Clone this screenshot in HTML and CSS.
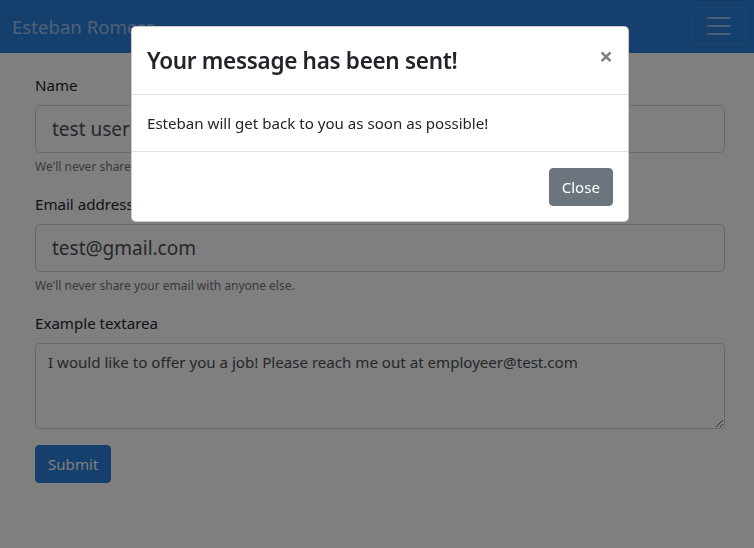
FILE: index.html
```html
<!DOCTYPE html>
<html lang="en">
<head>
<meta charset="utf-8">
<title>Esteban Romero</title>
<link rel="stylesheet" href="styles.css">
</head>
<body>
<nav class="navbar">
  <a class="brand" href="#">Esteban Romero</a>
  <button class="toggler" type="button" aria-label="Toggle navigation">
    <svg width="30" height="30" viewBox="0 0 30 30"><path d="M4 7h22M4 15h22M4 23h22" stroke="rgba(255,255,255,0.5)" stroke-width="2" stroke-linecap="round"/></svg>
  </button>
</nav>
<main class="content">
  <form class="contact">
    <div class="group">
      <label class="label">Name</label>
      <input class="control control-lg" type="text" value="test user">
      <small class="help">We'll never share your name with anyone else.</small>
    </div>
    <div class="group">
      <label class="label">Email address</label>
      <input class="control control-lg" type="email" value="test@gmail.com">
      <small class="help">We'll never share your email with anyone else.</small>
    </div>
    <div class="group">
      <label class="label">Example textarea</label>
      <textarea class="control area" rows="3">I would like to offer you a job! Please reach me out at employeer@test.com</textarea>
    </div>
    <button class="btn btn-primary" type="button">Submit</button>
  </form>
</main>
<div class="backdrop"></div>
<div class="modal">
  <div class="dialog">
    <div class="m-header">
      <h4 class="m-title">Your message has been sent!</h4>
      <button class="close" type="button" aria-label="Close">&times;</button>
    </div>
    <div class="m-body">Esteban will get back to you as soon as possible!</div>
    <div class="m-footer">
      <button class="btn btn-secondary" type="button">Close</button>
    </div>
  </div>
</div>
</body>
</html>
```
FILE: styles.css
```css
* { box-sizing: border-box; }
html, body { margin: 0; padding: 0; }
body {
  font-family: "Noto Sans", "Open Sans", sans-serif;
  font-size: 15.1px;
  line-height: 24px;
  color: #212529;
  background: #fff;
  width: 754px;
  height: 548px;
  overflow: hidden;
}
.navbar {
  height: 53px;
  background: #2a7ed8;
  display: flex;
  align-items: center;
  justify-content: space-between;
  padding: 0 8px 0 12px;
}
.brand {
  color: rgba(255,255,255,0.55);
  font-size: 18.6px;
  text-decoration: none;
  line-height: 30px;
}
.toggler {
  width: 54px;
  height: 38px;
  margin-top: -2px;
  background: transparent;
  border: 1px solid rgba(255,255,255,0.1);
  border-radius: 4px;
  display: flex;
  align-items: center;
  justify-content: center;
  padding: 0;
}
.content { padding: 20px 29px 0 35px; }
.group { margin-bottom: 16px; }
.label { display: block; margin-bottom: 8px; line-height: 24px; }
.control {
  display: block;
  width: 100%;
  font-family: inherit;
  color: #495057;
  background: #fff;
  border: 1px solid #ced4da;
  border-radius: 4px;
}
.control-lg {
  height: 48px;
  padding: 8px 16px;
  font-size: 19px;
  line-height: 30px;
  border-radius: 5px;
}
.area {
  height: 86px;
  padding: 6px 12px;
  font-size: 15.1px;
  line-height: 24px;
  resize: vertical;
}
.help {
  display: block;
  margin-top: 4px;
  font-size: 12px;
  color: #6c757d;
  line-height: 19px;
}
.btn {
  height: 38px;
  font-family: inherit;
  font-size: 15.1px;
  line-height: 24px;
  padding: 6px 12px;
  border-radius: 4px;
  border: 1px solid transparent;
  color: #fff;
  cursor: pointer;
}
.btn-primary { background: #2a7ed8; border-color: #2a7ed8; }
.btn-secondary { background: #6c757d; border-color: #6c757d; }
.backdrop {
  position: fixed;
  inset: 0;
  background: rgba(0,0,0,0.5);
}
.modal {
  position: fixed;
  inset: 0;
  display: flex;
  justify-content: flex-start;
  align-items: flex-start;
  padding: 26px 0 0 131px;
}
.dialog {
  width: 498px;
  background: #fff;
  border: 1px solid rgba(0,0,0,0.2);
  border-radius: 5px;
  overflow: hidden;
}
.m-header {
  display: flex;
  align-items: flex-start;
  justify-content: space-between;
  padding: 16px 16px 15px 15px;
  border-bottom: 1px solid #dee2e6;
}
.m-title {
  margin: 0;
  font-size: 22.5px;
  font-weight: 600;
  letter-spacing: -0.3px;
  line-height: 36px;
}
.close {
  background: transparent;
  border: 0;
  padding: 0;
  margin: 1px -1px 0 auto;
  font-family: inherit;
  font-size: 24px;
  font-weight: 700;
  line-height: 1;
  color: #000;
  opacity: 0.5;
  cursor: pointer;
}
.m-body { padding: 16px 15px; }
.m-footer {
  display: flex;
  justify-content: flex-end;
  padding: 16px 15px 15px;
  border-top: 1px solid #dee2e6;
}
```
